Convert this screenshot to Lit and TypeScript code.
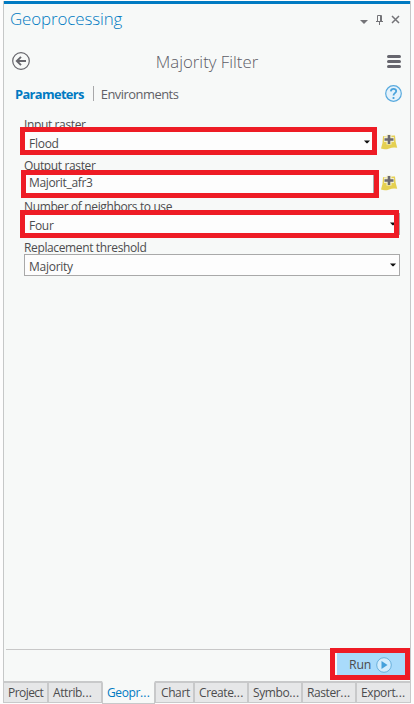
import { LitElement, html, css, nothing } from "lit";
import { customElement } from "lit/decorators.js";
import { classMap } from "lit/directives/class-map.js";

interface Field {
  label: string;
  value: string;
  select: boolean;
  browse: boolean;
  mark: string;
}

const FIELDS: Field[] = [
  { label: "Input raster", value: "Flood", select: true, browse: true, mark: "m1" },
  { label: "Output raster", value: "Majorit_afr3", select: false, browse: true, mark: "m2" },
  { label: "Number of neighbors to use", value: "Four", select: true, browse: false, mark: "m3" },
  { label: "Replacement threshold", value: "Majority", select: true, browse: false, mark: "" },
];

const TABS = [
  ["Project", "t0"], ["Attrib...", "t1"], ["Geopr...", "t2"], ["Chart", "t3"],
  ["Create...", "t4"], ["Symbo...", "t5"], ["Raster...", "t6"], ["Export...", "t7"],
];

@customElement("gp-field")
class GpField extends LitElement {
  static properties = { field: { attribute: false } };
  declare field: Field;
  static styles = css`
    :host { display: block; position: relative; height: 41px; }
    .label { height: 16px; line-height: 19px; white-space: nowrap; font-size: 12px; letter-spacing: -.37px; }
    .row { display: flex; align-items: center; }
    .box { box-sizing: border-box; flex: 1; height: 22px; border: 1px solid #a9a9a9; background: #fdfdfd;
      display: flex; align-items: center; justify-content: space-between; padding: 2px 3px 0 4px; font-size: 12px; letter-spacing: -.27px; }
    .box svg { margin-top: -3px; }
    .short { flex: 0 0 352px; padding-right: 5px; }
    .input { flex: 0 0 350px; padding-top: 1px; padding-bottom: 2px; letter-spacing: -.35px; }
    .add { margin-left: 4px; }
    .input + .add { margin-left: 6px; }
    .mark { position: absolute; box-sizing: border-box; height: 28px; border: 5px solid #ee1c25; }
    .m1 { left: -4px; top: 12px; width: 357px; }
    .m2 { left: -3px; top: 14px; width: 358px; }
    .m3 { left: -4px; top: 13px; width: 379px; }
    svg { display: block; }
  `;
  render() {
    const f = this.field;
    return html`
      <div class="label">${f.label}</div>
      <div class="row">
        <div class=${classMap({ box: true, short: f.browse && f.select, input: !f.select })}>
          <span>${f.value}</span>
          ${f.select ? html`<svg width="6" height="4"><path d="M0 .5h6L3.5 3.2h-1z" fill="#111" /></svg>` : nothing}
        </div>
        ${f.browse ? html`<svg class="add" width="18" height="18" viewBox="0 0 18 18">
          <path d="M3 3q3 1 6 0t6-.4q.3 7 2.200 12.200-4-1-8 .6T1 15.600Q3 10 3 3z" fill="#e5d052" />
          <path d="M9 1.500v10M4 6.500h10" stroke="#f4efc9" stroke-width="5" />
          <path d="M9 2v9M4.500 6.500h9" stroke="#6a6870" stroke-width="2.600" />
        </svg>` : nothing}
      </div>
      ${f.mark ? html`<div class="mark ${f.mark}"></div>` : nothing}
    `;
  }
}

@customElement("app-root")
class AppRoot extends LitElement {
  static styles = css`
    :host { display: block; box-sizing: border-box; width: 414px; height: 704px; padding: 1px 3px 0;
      background: #fdfdfd; color: #4c4c4e; font-family: "Open Sans", "Noto Sans", sans-serif; overflow: hidden; }
    svg { display: block; }
    .panel { box-sizing: border-box; width: 408px; height: 680px; background: #f7f9f8; border: solid #c6c8c8;
      border-width: 0 1px; display: flex; flex-direction: column; }
    .bar { height: 3px; background: #007ac2; flex: none; }
    .title { height: 29px; display: flex; align-items: center; padding: 0 10px 0 6px; flex: none; }
    .title h1 { margin: 0; font-size: 16.9px; letter-spacing: -.1px; font-weight: 300; color: #007ac2; flex: 1; line-height: 24px; }
    .head { height: 42px; margin-top: 7px; display: flex; align-items: center; padding: 0 9px 0 8px; flex: none; }
    .head h2 { margin: 2px 0 0 -3px; flex: 1; text-align: center; font-size: 16.8px; font-weight: 300; color: #5c5c66; line-height: 24px; }
    .nav { height: 22px; margin-bottom: 2px; display: flex; align-items: center; padding: 0 8px 0 11px; font-size: 12.9px; flex: none; }
    .nav b { color: #007ac2; font-weight: 700; letter-spacing: -.65px; position: relative; top: 1px; }
    .nav i { width: 1px; height: 15px; background: #a8a8aa; margin: 0 7px 0 9px; }
    .nav span { flex: 1; color: #606066; letter-spacing: -.5px; position: relative; top: 1px; }
    .form { padding: 9px 10px 0 20px; flex: 1; }
    .foot { border-top: 1px solid #c8c8c8; height: 31px; margin-left: 2px; display: flex; justify-content: flex-end; flex: none; position: relative; }
    .run { margin: 3px 5px 0 0; width: 68px; height: 23px; background: #a9dbfb; display: flex; align-items: center; padding-left: 12px; box-sizing: border-box; font-size: 12.3px; letter-spacing: -.2px; }
    .run svg { margin-left: 5px; }
    .mark { position: absolute; box-sizing: border-box; right: 0; top: -2px; width: 80px; height: 32px; border: 5px solid #ee1c25; }
    .tabs { display: flex; height: 23px; width: 408px; }
    .tab { box-sizing: border-box; height: 22px; background: #e6e7e8; border: solid #c8c9ca; border-width: 2px 1px 1px; white-space: nowrap;
      font-size: 12px; letter-spacing: -.4px; line-height: 19px; padding-left: 4px; flex: none; }
    .tab em { font-style: normal; letter-spacing: .2px; }
    .tab.on { background: #f7f9f8; border-top-color: #f7f9f8; height: 23px; color: #007ac2; }
    .t0 { width: 45px; letter-spacing: -.55px; } .t1 { width: 54px; } .t2 { width: 53px; } .t3 { width: 39px; padding-left: 5px; }
    .t4 { width: 54px; } .t5 { width: 54px; } .t6 { width: 54px; } .t7 { width: 55px; }
  `;
  render() {
    return html`
      <div class="panel">
        <div class="bar"></div>
        <div class="title">
          <h1>Geoprocessing</h1>
          <svg width="40" height="14" viewBox="0 0 40 14">
            <path d="M0 8h8L4 12z" fill="#747478" />
            <path d="M17.500 9V3.500h4V9M16 9.500h7M19.500 10v3M20.500 3.500V9" fill="none" stroke="#747478" />
            <path d="M32 4l7 7M39 4l-7 7" stroke="#747478" stroke-width="1.500" />
          </svg>
        </div>
        <div class="head">
          <svg width="18" height="18" viewBox="0 0 18 18" fill="none" stroke="#66666c">
            <circle cx="9" cy="9" r="8.300" stroke-width="1.200" />
            <path d="M14 9H5M9 4.800L4.800 9 9 13.200" stroke-width="1.900" />
          </svg>
          <h2>Majority Filter</h2>
          <svg width="14" height="13"><path d="M1.500 1.500h11M1.500 6.500h11M1.500 11.500h11" stroke="#66666e" stroke-width="3" stroke-linecap="round" /></svg>
        </div>
        <div class="nav">
          <b>Parameters</b><i></i><span>Environments</span>
          <svg width="17" height="17" viewBox="0 0 17 17" fill="none">
            <circle cx="8.500" cy="8.500" r="7.800" fill="#e4f2fb" stroke="#58aade" stroke-width="1.200" />
            <path d="M5.800 6.400C6 3 11.400 3.200 11.200 6.200c-.1 2-2.700 2-2.700 4.300M8.500 12v2" stroke="#4aa3dc" stroke-width="1.800" />
          </svg>
        </div>
        <div class="form">${FIELDS.map((f) => html`<gp-field .field=${f}></gp-field>`)}</div>
        <div class="foot">
          <div class="run">Run
            <svg width="16" height="16" viewBox="0 0 16 16">
              <circle cx="8" cy="8" r="7.300" fill="#d3edfd" stroke="#69b0dc" />
              <path d="M5.500 4l6 4-6 4z" fill="#45a0da" />
            </svg>
          </div>
          <div class="mark"></div>
        </div>
      </div>
      <div class="tabs">${TABS.map(([t, c]) => html`<div class=${classMap({ tab: true, [c]: true, on: c === "t2" })}>${t.replace("...", "")}${t.endsWith("...") ? html`<em>...</em>` : nothing}</div>`)}</div>
    `;
  }
}
